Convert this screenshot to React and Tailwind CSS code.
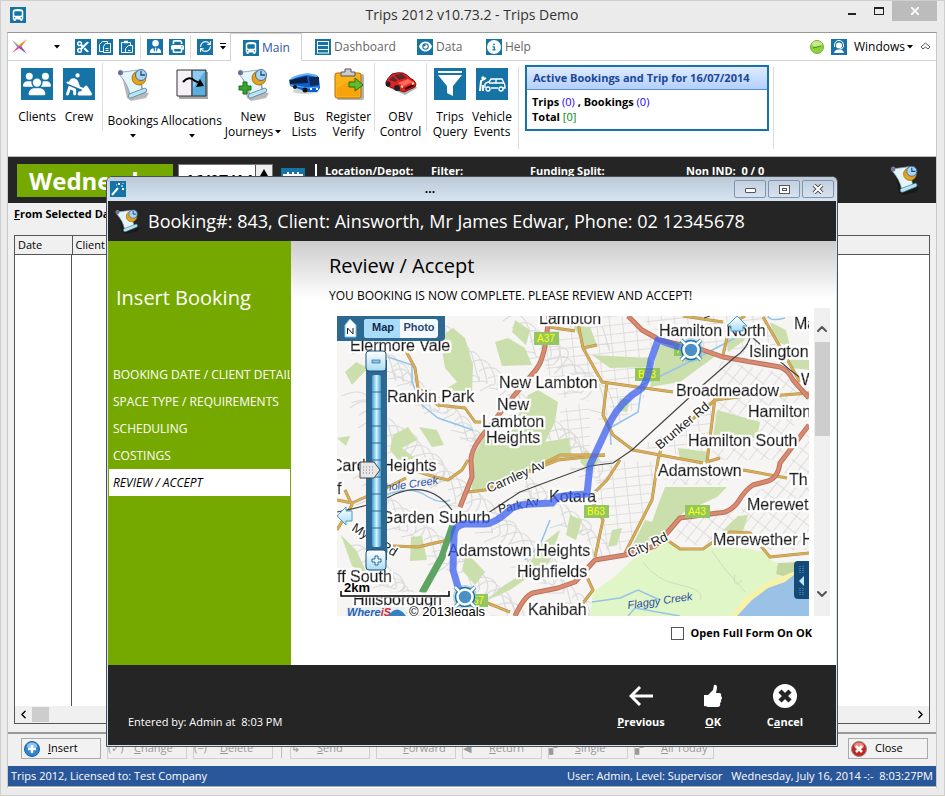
import React, { useState } from 'react';
import {
  FaBusSimple,
  FaCircleInfo,
  FaEye,
  FaPersonDigging,
  FaPrint,
  FaScissors,
  FaUserTie,
  FaUsers,
} from 'react-icons/fa6';
import { ChevronDown, ChevronLeft, ChevronRight, ChevronUp, RefreshCw } from 'lucide-react';

const steps = [
  'BOOKING DATE / CLIENT DETAILS',
  'SPACE TYPE / REQUIREMENTS',
  'SCHEDULING',
  'COSTINGS',
  'REVIEW / ACCEPT',
];

function Tile({ children, big }) {
  return (
    <span className={`flex shrink-0 items-center justify-center bg-[#1573a5] text-white ${big ? 'size-8' : 'size-4'}`}>
      {children}
    </span>
  );
}

function Caret() {
  return (
    <svg width="6" height="4" viewBox="0 0 6 4" className="shrink-0">
      <path d="M0 0H6L3 3.5Z" fill="#000" />
    </svg>
  );
}

function ScrollIcon({ size = 34, plus }) {
  return (
    <svg width={size} height={size} viewBox="0 0 34 34" className="shrink-0">
      <path d="M6 9L24 8L28 25L33 26L30 31L15 34L11 31Z" fill="#000" opacity=".28" />
      <path d="M3 7C1 3 6 2 7 5L22 3L26 23L14 28Q12 17 3 7Z" fill="#e4f6fc" stroke="#7d9dac" strokeWidth=".8" />
      <path d="M2 6C2 2 7 3 7 6C7 9 2 9 2 6Z" fill="#6d7390" />
      <path d="M13 27L29 21Q32 22 30 25L15 31Q11 31 13 27Z" fill="#b8e4f4" stroke="#4d7d94" strokeWidth=".8" />
      <circle cx="23" cy="11" r="7" fill="#e8a31b" stroke="#9c6508" strokeWidth=".8" />
      <circle cx="25" cy="8" r="5.500" fill="#a9d3f3" stroke="#3f6f9c" />
      <path d="M25 4V8L29 8" stroke="#1d4a78" fill="none" strokeWidth="1.300" />
      {plus && <path d="M7 15H11V19H15V23H11V27H7V23H3V19H7Z" fill="#37a42c" stroke="#1c6d1a" />}
    </svg>
  );
}

function AllocationsIcon() {
  return (
    <svg width="34" height="32" viewBox="0 0 34 32">
      <path d="M4 4H33V31H4Z" fill="#000" opacity=".35" />
      <path d="M2 2H17V28H2Z" fill="#f6f1f8" stroke="#333" />
      <path d="M17 2H31V28H17Z" fill="#5baede" stroke="#333" />
      <path d="M18 3H30L18 20Z" fill="#8ecbee" />
      <path d="M8 14Q14 7 20 13L27 16" stroke="#000" strokeWidth="2" fill="none" />
      <path d="M29 18L21 19L25 11Z" />
    </svg>
  );
}

function CoachIcon() {
  return (
    <svg width="33" height="32" viewBox="0 0 33 32">
      <ellipse cx="18" cy="23" rx="13" ry="3" fill="#9aa" opacity=".5" />
      <path d="M1 12Q9 7 20 6Q30 6 31 10L32 20L29 24L20 24L2 18Z" fill="#0d5fd0" />
      <path d="M2 12L19 8L20 15L2 16Z" fill="#0b1f45" />
      <path d="M21 9L31 9L31 17L22 18Z" fill="#102b57" />
      <path d="M3 11Q10 7 20 6L29 8" stroke="#66b5ff" strokeWidth="2" fill="none" />
      <path d="M2 17L20 20L31 19" stroke="#5db1ff" fill="none" />
      <circle cx="17" cy="22" r="2.5" fill="#111" />
      <circle cx="7" cy="19" r="2" fill="#111" />
      <path d="M22 21H24M28 21H30" stroke="#fff" strokeWidth="2" />
    </svg>
  );
}

function ClipIcon() {
  return (
    <svg width="32" height="32" viewBox="0 0 32 32">
      <rect x="4" y="6" width="27" height="26" rx="2" fill="#000" opacity=".3" />
      <rect x="2" y="5" width="26" height="25" rx="2" fill="#fbb216" stroke="#b06f08" />
      <path d="M4 20L26 8V28H4Z" fill="#f59a06" opacity=".6" />
      <path d="M8 8V4H12V1H18V4H22V8Z" fill="#ccc" stroke="#555" />
      <path d="M16 14H22V10L30 17L22 23V19H16Z" fill="#62bd2e" stroke="#2a6d12" />
    </svg>
  );
}

function CarIcon() {
  return (
    <svg width="34" height="32" viewBox="0 0 34 32">
      <path d="M6 20L21 27L33 20L29 15Z" fill="#000" opacity=".3" />
      <path d="M2 14Q3 11 8 6Q14 4 19 5Q24 7 26 10Q31 12 32 16L31 19L20 24L14 22L3 18Z" fill="#e32222" stroke="#7d0e0e" />
      <path d="M5 12L9 8L13 12L12 14ZM10 7L18 6L23 10L15 12Z" fill="#5b2a31" />
      <path d="M14 15L24 11L29 14L20 18Z" fill="#ff6a5c" />
      <circle cx="13" cy="20" r="3" fill="#222" />
      <circle cx="4" cy="16" r="2.5" fill="#222" />
      <path d="M21 21L30 17" stroke="#300" strokeWidth="2" />
      <path d="M17 18L19 19M28 16L30 15" stroke="#ffe680" strokeWidth="2" />
    </svg>
  );
}

function FunnelIcon() {
  return (
    <svg width="32" height="32" viewBox="0 0 32 32" fill="#fff">
      <path d="M4 3H28V5H4ZM4 7H28L19 18V28L13 25V18Z" />
    </svg>
  );
}

function VehicleEventIcon() {
  return (
    <svg width="32" height="32" viewBox="0 0 32 32" fill="none" stroke="#fff" strokeWidth="1.4">
      <path d="M9 20V16Q9 15 13 14L15 11H26L28 15Q29 16 29 20H27M22 20H15M13 15H28M20 11V15" />
      <circle cx="12" cy="21" r="2" />
      <circle cx="25" cy="21" r="2" />
      <path d="M4 23L5 13L10 10M7 17V23" strokeWidth="2" />
      <circle cx="7" cy="10" r="1" fill="#fff" />
    </svg>
  );
}

function RibbonItem({ icon, lines, width, low, caret, inlineCaret }) {
  return (
    <button type="button" className={`flex shrink-0 flex-col items-center ${width}`}>
      <span className="flex h-8 items-center justify-center">{icon}</span>
      <span className={`flex flex-col items-center whitespace-nowrap leading-[15px] ${low ? 'mt-[13px]' : 'mt-[9px]'}`}>
        {lines.map((line, i) => (
          <span key={line} className="flex items-center gap-0.5">
            {line}
            {inlineCaret && i === lines.length - 1 && <Caret />}
          </span>
        ))}
      </span>
      {caret && <span className="mt-1.5"><Caret /></span>}
    </button>
  );
}

function Separator({ tall }) {
  return <span className={`block w-px shrink-0 bg-[#dcdcdc] ${tall ? 'h-[82px]' : 'h-[68px]'}`} />;
}

function TitleBar() {
  return (
    <header className="flex h-[31px] shrink-0 items-start">
      <span className="ml-0.5 mt-1.5"><Tile><FaBusSimple size={12} /></Tile></span>
      <h1 className="flex-1 pl-[80px] pt-[3px] text-center text-sm leading-[22px] text-[#333]">Trips 2012 v10.73.2 - Trips Demo</h1>
      <button type="button" aria-label="Minimize" className="flex h-5 w-7 items-center justify-center">
        <span className="mt-1.5 h-0.5 w-2 bg-[#222]" />
      </button>
      <button type="button" aria-label="Maximize" className="flex h-5 w-[26px] items-center justify-center">
        <span className="h-2 w-2.5 border border-t-2 border-[#222]" />
      </button>
      <button type="button" aria-label="Close" className="flex h-5 w-[45px] items-center justify-center bg-[#bcbcbc]">
        <svg width="8" height="8" viewBox="0 0 8 8" stroke="#fff" strokeWidth="1.8"><path d="M0 0L8 8M8 0L0 8" /></svg>
      </button>
    </header>
  );
}

function MenuRow() {
  return (
    <nav className="flex h-7 shrink-0 items-stretch text-xs text-[#666]">
      <div className="flex h-7 w-[222px] shrink-0 items-center border-b border-[#d2d2d2] pl-1">
        <button type="button" aria-label="Application menu" className="flex items-center gap-[27px]">
          <svg width="15" height="15" viewBox="0 0 15 15">
            <path d="M0 1L8 7.500L6 9Z" fill="#4a9ad8" />
            <path d="M15 0L9 8L7 6Z" fill="#f08a1c" />
            <path d="M0 14L7 6L9 8Z" fill="#e64a9a" />
            <path d="M15 15L7 9L9 7Z" fill="#7b4fc0" />
            <path d="M0 1L5 6L8 7Z" fill="#f3c52b" />
          </svg>
          <Caret />
        </button>
        <div className="ml-[15px] flex gap-1.5">
          <button type="button" aria-label="Cut"><Tile><FaScissors size={12} /></Tile></button>
          <button type="button" aria-label="Copy">
            <Tile>
              <svg width="14" height="14" viewBox="0 0 14 14" fill="#1573a5" stroke="#fff"><path d="M1.500 4.500L4.500 1.500H9.500V11.500H1.500Z" /><path d="M5.500 6.500L7.500 3.500H12.500V12.500H5.500ZM7.500 8.500H10.500M7.500 10.500H10.500" /></svg>
            </Tile>
          </button>
          <button type="button" aria-label="Paste">
            <Tile>
              <svg width="14" height="14" viewBox="0 0 14 14" fill="#1573a5" stroke="#fff"><path d="M1.500 2.500H10.500V12.500H1.500Z" /><path d="M4 2H8" strokeWidth="2.500" /><path d="M5.500 8.500L8.500 5.500H12.500V12.500H5.500ZM8 10.500H10.500" /></svg>
            </Tile>
          </button>
        </div>
        <span className="ml-[5px] mr-1.5 h-6 w-px bg-[#dcdcdc]" />
        <div className="flex gap-1.5">
          <button type="button" aria-label="User"><Tile><FaUserTie size={13} /></Tile></button>
          <button type="button" aria-label="Print"><Tile><FaPrint size={13} /></Tile></button>
        </div>
        <span className="ml-[5px] mr-1.5 h-6 w-px bg-[#dcdcdc]" />
        <button type="button" aria-label="Refresh"><Tile><RefreshCw size={13} /></Tile></button>
        <button type="button" aria-label="Customize" className="ml-[7px] flex flex-col items-center gap-0.5">
          <span className="h-px w-1.5 bg-black" />
          <Caret />
        </button>
      </div>
      <a href="#main" className="flex w-[72px] shrink-0 items-center gap-[3px] border-x border-t border-[#d2d2d2] pl-3 text-[#2b579a]">
        <Tile><FaBusSimple size={12} /></Tile>Main
      </a>
      <div className="flex flex-1 items-center border-b border-[#d2d2d2] pl-[13px]">
        <a href="#dashboard" className="flex w-[102px] items-center gap-[3px]">
          <Tile>
            <svg width="14" height="14" viewBox="0 0 14 14" fill="none" stroke="#fff"><path d="M1 1.500H13M1 5.500H13M1 9.500H13M1 13H13M1.500 1V13M12.500 1V13" /></svg>
          </Tile>
          Dashboard
        </a>
        <a href="#data" className="flex w-[69px] items-center gap-[3px]"><Tile><FaEye size={13} /></Tile>Data</a>
        <a href="#help" className="flex items-center gap-[3px]"><Tile><FaCircleInfo size={14} /></Tile>Help</a>
        <div className="ml-auto flex items-center gap-[7px] pr-[5px] text-black">
          <svg width="14" height="14" viewBox="0 0 14 14">
            <circle cx="7" cy="7" r="6.500" fill="#8fd03f" stroke="#79b035" />
            <ellipse cx="7" cy="4" rx="5" ry="3" fill="#c5ea8e" />
            <path d="M3 8L11 6" stroke="#4b8a1c" />
          </svg>
          <Tile>
            <svg width="16" height="16" viewBox="0 0 16 16" fill="none" stroke="#fff">
              <path d="M3.500 8V6Q4 1.500 8 1.500T12.500 6V8" />
              <circle cx="8" cy="6.500" r="3" fill="#fff" stroke="none" />
              <path d="M3 14Q4 10 8 10.500Q12 10 13 14" fill="#fff" stroke="none" />
              <path d="M12 8Q12 10 9 10" />
            </svg>
          </Tile>
          <button type="button" className="flex items-center gap-0.5">Windows<Caret /></button>
          <button type="button" aria-label="Collapse ribbon">
            <svg width="11" height="9" viewBox="0 0 11 9" fill="none" stroke="#555"><path d="M1 5L5.500 1L10 5L8 7L5.500 5L3 7Z" /></svg>
          </button>
        </div>
      </div>
    </nav>
  );
}

function Ribbon() {
  return (
    <div className="flex h-[95px] shrink-0 items-start pl-2 text-xs leading-[15px]">
      <div className="flex pt-[7px]">
        <RibbonItem width="w-[42px]" icon={<Tile big><FaUsers size={28} /></Tile>} lines={['Clients']} />
        <RibbonItem width="w-[42px]" icon={<Tile big><FaPersonDigging size={26} /></Tile>} lines={['Crew']} />
      </div>
      <span className="ml-0.5 mt-0.5"><Separator /></span>
      <div className="ml-0.5 flex pt-[7px]">
        <RibbonItem width="w-[56px]" icon={<ScrollIcon />} lines={['Bookings']} low caret />
        <RibbonItem width="w-[61px]" icon={<AllocationsIcon />} lines={['Allocations']} low caret />
        <RibbonItem width="w-[62px]" icon={<ScrollIcon plus />} lines={['New', 'Journeys']} inlineCaret />
        <RibbonItem width="w-[40px]" icon={<CoachIcon />} lines={['Bus', 'Lists']} />
        <RibbonItem width="w-[49px]" icon={<ClipIcon />} lines={['Register', 'Verify']} />
      </div>
      <span className="ml-px mt-0.5"><Separator /></span>
      <div className="px-px pt-[7px]">
        <RibbonItem width="w-[49px]" icon={<CarIcon />} lines={['OBV', 'Control']} />
      </div>
      <span className="mt-0.5"><Separator /></span>
      <div className="ml-0.5 flex pt-[7px]">
        <RibbonItem width="w-[42px]" icon={<Tile big><FunnelIcon /></Tile>} lines={['Trips', 'Query']} />
        <RibbonItem width="w-[42px]" icon={<Tile big><VehicleEventIcon /></Tile>} lines={['Vehicle', 'Events']} />
      </div>
      <span className="ml-[5px] mt-1.5"><Separator tall /></span>
      <section className="ml-1.5 mt-1 h-[66px] w-[244px] shrink-0 border-2 border-[#1573a5] text-[11px] leading-[15px]">
        <h2 className="whitespace-nowrap border-b border-[#5b8fd0] bg-gradient-to-b from-[#dfebfd] to-[#b3d0fb] pl-1.5 font-bold leading-[22px] text-[#1b4796]">
          Active Bookings and Trip for 16/07/2014
        </h2>
        <p className="pl-[5px] pt-1 font-bold">
          Trips <span className="font-normal text-[#2200ff]">(0)</span> , Bookings <span className="font-normal text-[#2200ff]">(0)</span>
        </p>
        <p className="pl-[5px] font-bold">Total <span className="font-normal text-[#058a05]">[0]</span></p>
      </section>
      <span className="ml-1 mt-1.5"><Separator tall /></span>
    </div>
  );
}

function DayBand() {
  return (
    <div className="flex h-[47px] shrink-0 items-start border-t border-[#bbb] bg-[#252525] pl-[9px] pt-[7px] text-[11px] font-bold leading-[14px] text-white">
      <div className="h-[33px] w-[156px] shrink-0 bg-[#76a900] pl-3 text-2xl leading-[34px]">Wednesday</div>
      <div className="ml-[5px] flex h-[33px] w-[95px] shrink-0 border border-[#777] bg-white text-black">
        <input type="text" aria-label="Date" defaultValue="16/07/14" className="w-[78px] min-w-0 pl-1.5 text-base font-bold" />
        <button type="button" aria-label="Next day" className="flex w-[17px] justify-center border-l border-[#555] bg-[#eee] pt-1">
          <svg width="8" height="7" viewBox="0 0 8 7"><path d="M4 0L8 7H0Z" /></svg>
        </button>
      </div>
      <span className="ml-2 mt-1 flex h-6 w-6 shrink-0 justify-center bg-[#1573a5] pt-1">
        <svg width="20" height="14" viewBox="0 0 20 14" fill="#fff"><path d="M0 2H4V0H6V2H9V0H11V2H14V0H16V2H20V5H0ZM0 7H20V14H0Z" /></svg>
      </span>
      <span className="ml-[10px] h-8 w-0.5 shrink-0 bg-white" />
      <span className="ml-2 w-[106px] shrink-0">Location/Depot:</span>
      <span className="w-[99px] shrink-0">Filter:</span>
      <span className="w-[156px] shrink-0">Funding Split:</span>
      <span className="shrink-0">Non IND:&nbsp; 0 / 0</span>
      <span className="ml-auto mr-4"><ScrollIcon size={31} /></span>
    </div>
  );
}

function BookingList() {
  return (
    <div className="mx-1.5 flex flex-1 flex-col border border-[#555] bg-white text-[11px]">
      <table className="w-full table-fixed text-left">
        <thead>
          <tr className="h-[18px] border-b border-[#555] bg-[#f0f0f0]">
            <th className="w-[57px] border-r border-[#555] pl-[3px] font-normal">Date</th>
            <th className="pl-[3px] font-normal">Client</th>
          </tr>
        </thead>
      </table>
      <div className="w-[57px] flex-1 border-r border-[#555]" />
      <div className="flex h-[17px] items-center justify-between bg-[#f0f0f0]">
        <div className="flex h-full items-center">
          <button type="button" aria-label="Scroll left" className="flex w-[17px] justify-center"><ChevronLeft size={13} strokeWidth={2.5} /></button>
          <span className="h-[15px] w-[17px] bg-[#cdcdcd]" />
        </div>
        <button type="button" aria-label="Scroll right" className="flex w-[17px] justify-center"><ChevronRight size={13} strokeWidth={2.5} /></button>
      </div>
    </div>
  );
}

const disabledButtons = [
  { letter: 'C', rest: 'hange', mark: '(✓)' },
  { letter: 'D', rest: 'elete', mark: '(−)' },
  { letter: 'S', rest: 'end', mark: '↳', split: true },
  { letter: 'F', rest: 'orward', mark: '' },
  { letter: 'R', rest: 'eturn', mark: '◀' },
  { letter: 'S', rest: 'ingle', mark: '▞' },
  { letter: 'A', rest: 'll Today', mark: '▞' },
];

function ButtonRow() {
  return (
    <div className="flex h-[34px] shrink-0 items-start gap-1.5 border-t-2 border-[#999] px-2 pl-[13px] pt-1 text-[11px]">
      <button type="button" className="flex h-[21px] w-20 shrink-0 items-center gap-2 border border-[#aaa] bg-[#f2f2f2] pl-0.5">
        <svg width="16" height="16" viewBox="0 0 16 16">
          <circle cx="8" cy="8" r="7.500" fill="#2f86d2" stroke="#1a5ea3" />
          <ellipse cx="8" cy="5" rx="5" ry="3.500" fill="#8cc4f2" />
          <path d="M8 4V12M4 8H12" stroke="#fff" strokeWidth="2.500" />
        </svg>
        <span><u>I</u>nsert</span>
      </button>
      {disabledButtons.map(({ letter, rest, mark, split }) => (
        <React.Fragment key={letter + rest}>
          {split && <span className="mx-0.5 h-5 w-px shrink-0 bg-[#bbb]" />}
          <button type="button" disabled className="flex h-[21px] w-20 shrink-0 items-center border border-[#d0d0d0] text-[#9a9a9a]">
            <span className="w-[26px] text-left">{mark}</span>
            <span><u>{letter}</u>{rest}</span>
          </button>
        </React.Fragment>
      ))}
      <button type="button" className="ml-auto flex h-[21px] w-20 shrink-0 items-center gap-2 border border-[#aaa] bg-[#f2f2f2] pl-0.5">
        <svg width="16" height="16" viewBox="0 0 16 16">
          <circle cx="8" cy="8" r="7.500" fill="#c62420" stroke="#8c8c8c" />
          <ellipse cx="8" cy="5" rx="5" ry="3.500" fill="#ee8a78" />
          <path d="M5 5L11 11M11 5L5 11" stroke="#fff" strokeWidth="2.500" />
        </svg>
        Close
      </button>
    </div>
  );
}

const parks = [
  'M478 333L495 342L508 338L525 348L532 365L502 366L495 342Z',
  'M440 337L453 328L465 338L473 365L472 395L465 402L447 388L457 382L445 368Z',
  'M528 395L538 390L558 402L555 422L545 442L569 438L571 457L538 465L520 477L485 490L472 490L470 462L485 435L505 445Z',
  'M658 345L703 348L717 355L680 382L650 387Z',
  'M592 355L650 358L652 367L610 368Z',
  'M573 325L590 327L597 345L585 348Z',
  'M717 410L760 422L757 438L713 437Z',
  'M678 448L708 452L706 462L680 460Z',
  'M732 328L745 340L728 352L726 338Z',
  'M770 322L786 330L790 346L776 342Z',
  'M788 360H809V370L792 368Z',
  'M665 487L727 487L717 497L683 513L667 533L630 550L645 520L652 522L658 505Z',
  'M612 530L622 528L617 545L608 547Z',
  'M738 516L748 515L743 531L722 531Z',
  'M393 435L408 427L417 440L402 448L415 458L400 462L390 450Z',
  'M419 427L437 430L444 445L432 447Z',
  'M345 372L356 362L368 368L352 385Z',
  'M388 326L402 318L412 330L398 337Z',
  'M411 537L422 536L427 560L410 561Z',
  'M540 545L560 530L550 562L510 590L488 600L500 588L525 572Z',
  'M466 552L485 572L475 585L462 570Z',
  'M570 515L582 520L576 540L566 535Z',
  'M337 438L350 436L346 446Z',
  'M341 535L356 550L368 575L352 566Z',
  'M515 320L530 330L526 345L512 332Z',
  'M585 450L600 460L590 472L580 462Z',
  'M620 398L630 400L627 412L617 410Z',
];

const redRoads = [
  'M549 316L546 340Q543 362 535 371L512 398L485 432Q470 450 471 462L472 477L460 507',
  'M628 316L642 330L660 340L703 350L723 357L780 367Q788 370 793 380L809 398',
  'M809 425L780 463Q778 478 768 481L753 485Q745 490 738 502Q730 513 718 513L680 518L667 533L655 546L625 555L595 560L575 582L558 588L533 593Q525 595 515 616',
];

const tanRoads = [
  'M400 338L407 353L415 368L418 388L438 405L465 408L475 422L487 422',
  'M549 327L575 331',
  'M337 500L352 503L388 487L406 478',
  'M393 546L418 547L448 540',
  'M400 466L435 477L448 480L462 470L468 460',
  'M468 492L485 490L525 473L558 460L605 455',
  'M577 318L583 348L602 382L673 392',
  'M607 382L603 415L613 435L633 450L703 463',
  'M715 398L707 462L720 458',
  'M715 400L753 395L770 396L809 393',
  'M683 316L723 322M763 317L783 352L800 382',
  'M723 355L730 325L745 316M583 348L597 345',
  'M715 400L662 445L658 460L652 500L625 553',
  'M620 460L607 480L590 497L603 520L595 557',
  'M667 540L680 549L703 549L713 542L730 532L750 533L770 557L809 553',
  'M587 577L593 590L583 603M743 470L787 478',
  'M337 530L352 505L345 490M465 595L485 602L510 612',
  'M538 466L560 455L605 455',
];

// Short curved local streets, spread over the suburbs on the western side.
const lanes = Array.from({ length: 125 }, (_, i) => {
  const x = 340 + ((i * 73) % 250);
  const y = 320 + ((i * 137) % 292);
  const a = 8 + ((i * 31) % 17);
  const b = 5 + ((i * 17) % 13);
  return `M${x} ${y}q${a} ${-b} ${a + 7} ${b - 5}t${b - 12} ${a}l${-b} ${6 - (i % 12)}`;
}).join('');

const places = [
  [539, 324, 'Lambton'], [350, 351, 'Elermore Vale'], [387, 402, 'Rankin Park'], [499, 388, 'New Lambton'],
  [497, 410, 'New'], [482, 427, 'Lambton'], [486, 443, 'Heights'], [659, 336, 'Hamilton North'],
  [794, 329, 'Ma'], [749, 357, 'Islington'], [801, 385, 'W'], [676, 396, 'Broadmeadow'],
  [748, 417, 'Hamilton'], [688, 446, 'Hamilton South'], [658, 476, 'Adamstown'], [331, 471, 'Cardiff Heights'],
  [337, 494, 'f'], [381, 523, 'Garden Suburb'], [549, 502, 'Kotara'], [448, 556, 'Adamstown Heights'],
  [517, 577, 'Highfields'], [337, 582, 'ff South'], [353, 605, 'Hillsborough'], [528, 615, 'Kahibah'],
  [747, 510, 'Merewet'], [713, 545, 'Merewether H'], [789, 485, 'Th'],
];

const streetNames = [
  [660, 450, -40, 'Brunker Rd'], [489, 493, -24, 'Carnley Av'], [630, 558, -25, 'City Rd'], [351, 530, 32, 'Myall Rd'],
];

const shields = [[534, 332, 'A37'], [635, 368, 'B63'], [584, 505, 'B63'], [685, 505, 'A43'], [674, 343, 'A15'], [463, 594, 'B57']];

function RouteEnd({ x, y }) {
  return (
    <g fill="none">
      <circle cx={x} cy={y} r="12" fill="#6fb6d8" opacity=".45" />
      <circle cx={x} cy={y} r="8" stroke="#1c6f9e" strokeWidth="4.500" />
      <path d={`M${x - 10} ${y - 10}l5 5M${x + 10} ${y - 10}l-5 5M${x - 10} ${y + 10}l5 -5M${x + 10} ${y + 10}l-5 -5`} stroke="#1c6f9e" strokeWidth="4" />
      <circle cx={x} cy={y} r="7.500" fill="#4a8fc6" stroke="#fff" strokeWidth="2.500" />
      <path d={`M${x - 10} ${y - 10}l4 4M${x + 10} ${y - 10}l-4 4M${x - 10} ${y + 10}l4 -4M${x + 10} ${y + 10}l-4 -4`} stroke="#fff" strokeWidth="2.500" />
    </g>
  );
}

function RouteMap() {
  return (
    <svg viewBox="337 316 472 300" preserveAspectRatio="xMinYMin slice" className="h-[300px] min-w-0 flex-1 font-['Liberation_Sans',sans-serif]" role="img" aria-label="Route map">
      <defs>
        <pattern id="grid-a" width="13" height="9" patternUnits="userSpaceOnUse" patternTransform="rotate(-6)">
          <path d="M0 0H13M0 0V9" stroke="#d8d8d8" fill="none" strokeWidth="1.500" />
        </pattern>
        <pattern id="grid-b" width="9" height="14" patternUnits="userSpaceOnUse" patternTransform="rotate(38)">
          <path d="M0 0H9M0 0V14" stroke="#d8d8d8" fill="none" strokeWidth="1.500" />
        </pattern>
        <linearGradient id="groove" x1="0" x2="1">
          <stop offset="0" stopColor="#3d9fd8" />
          <stop offset=".5" stopColor="#d8f2ff" />
          <stop offset="1" stopColor="#3d9fd8" />
        </linearGradient>
        <linearGradient id="knob" x1="0" x2="0" y1="0" y2="1">
          <stop offset="0" stopColor="#fff" />
          <stop offset="1" stopColor="#a9dcf5" />
        </linearGradient>
        <filter id="halo" filterUnits="userSpaceOnUse" x="330" y="310" width="490" height="312">
          <feMorphology in="SourceAlpha" operator="dilate" radius="1.500" result="spread" />
          <feFlood floodColor="#fff" />
          <feComposite in2="spread" operator="in" />
          <feMerge>
            <feMergeNode />
            <feMergeNode in="SourceGraphic" />
          </feMerge>
        </filter>
      </defs>
      <rect x="337" y="316" width="472" height="300" fill="#f6f5f4" />
      <path d={lanes} fill="none" stroke="#dcdcdc" strokeWidth="1.200" />
      <path d="M549 316H628L658 340L640 385L600 383L560 400L545 365ZM607 385L640 395L715 402L708 460L640 447L612 430ZM590 400L590 460H560V410ZM600 460L655 462L650 505L625 550L600 550L605 520L592 497ZM640 316H770L780 360L665 340Z" fill="url(#grid-a)" />
      <path d="M720 360L790 375L805 400L780 460L712 460L716 402ZM740 500L780 480L809 430V550L770 550L745 530ZM685 517L735 512L740 530L700 546L672 538ZM665 462L740 465L725 485H665Z" fill="url(#grid-b)" />
      <path d="M655 386L700 388L716 396L690 425L640 445L612 432Z" fill="#f8f7f6" />
      <g fill="#cbdfac">{parks.map((d) => <path key={d} d={d} />)}</g>
      <path d="M590 616L593 592L613 578L632 560L667 541L680 550L703 551L715 544L765 552L773 562L809 566V616Z" fill="#e1f6c6" />
      <path d="M778 563L800 562L809 570L790 578L776 574Z" fill="#c3d6a0" />
      <path d="M732 616L745 598L765 584L790 573L809 568V616Z" fill="#f8f2a8" />
      <path d="M737 616L752 600L768 588L785 582L795 574L809 572V616Z" fill="#9ac1e6" />
      <path d="M643 562Q655 580 680 585T700 600M712 551Q725 570 730 575T745 592M735 575Q732 590 742 580" fill="none" stroke="#cfdcc0" />
      <g fill="none" stroke="#93c4ec" strokeWidth="1.500">
        <path d="M388 357L412 365L412 382L422 405L438 418L473 430M737 337L703 355L677 368L642 385L638 412L610 428L611 445M592 602L620 598L638 590L660 600M628 616L635 608L680 616M383 496Q410 485 425 495T450 500M550 520L540 545L525 560M768 316Q770 322 785 318" />
      </g>
      <g fill="none" stroke="#b18f4c" strokeWidth="3" strokeLinejoin="round">{tanRoads.map((d) => <path key={d} d={d} />)}</g>
      <g fill="none" stroke="#d8ad58" strokeWidth="2" strokeLinejoin="round">{tanRoads.map((d) => <path key={d} d={d} />)}</g>
      <g fill="none" stroke="#b9735c" strokeWidth="5" strokeLinejoin="round">{redRoads.map((d) => <path key={d} d={d} />)}</g>
      <g fill="none" stroke="#d98a70" strokeWidth="3" strokeLinejoin="round">{redRoads.map((d) => <path key={d} d={d} />)}</g>
      <path d="M453 525L442 557L422 593" fill="none" stroke="#5ea564" strokeWidth="7" />
      <path d="M750 338Q746 350 735 357L703 385L632 450L613 463L590 466L520 492L485 515M753 338L790 370L809 384M704 318L710 316M337 512Q375 505 395 494Q430 480 452 510" fill="none" stroke="#444" strokeWidth="1.200" />
      {shields.map(([x, y, label]) => (
        <g key={`${x}-${y}`}>
          <rect x={x} y={y} width="25" height="13" fill="#93c663" />
          <text x={x + 12} y={y + 10} textAnchor="middle" fontSize="10" fill="#ffff00">{label}</text>
        </g>
      ))}
      <g fontSize="16" fill="#1c1c1c" stroke="#1c1c1c" strokeWidth=".5" filter="url(#halo)">
        {places.map(([x, y, name]) => <text key={`${x}-${y}`} x={x} y={y}>{name}</text>)}
      </g>
      <g fontSize="13" fill="#222" stroke="#fff" strokeWidth="3" style={{ paintOrder: 'stroke' }}>
        {streetNames.map(([x, y, angle, name]) => <text key={name} x={x} y={y} transform={`rotate(${angle} ${x} ${y})`}>{name}</text>)}
      </g>
      <g fontSize="11" fontStyle="italic" fill="#2a4f9e">
        <text x="366" y="494" transform="rotate(-8 366 494)">Tickhole Creek</text>
        <text x="628" y="609" transform="rotate(-8 628 609)">Flaggy Creek</text>
      </g>
      <text x="499" y="513" transform="rotate(-11 499 513)" fontSize="12" fill="#223">Park Av</text>
      <path d="M688 350L658 340L651 360Q648 380 642 388Q620 402 610 422L590 465L587 494L570 495L558 497L552 503L532 504Q520 504 512 508Q495 524 485 524L464 524Q454 526 454 535L453 570L458 587L465 596" fill="none" stroke="#3a5ff0" strokeOpacity=".74" strokeWidth="7" strokeLinejoin="round" />
      <RouteEnd x={691} y={350} />
      <RouteEnd x={465} y={597} />

      {/* Pan arrows */}
      <path d="M737 316L747 326H743V331H731V326H727Z" fill="url(#knob)" stroke="#4a9cc8" />
      <path d="M337 516L346 507V511H352V521H346V525Z" fill="url(#knob)" stroke="#4a9cc8" />

      {/* Map / photo switch */}
      <path d="M337 316H445V337Q445 341 441 341H337Z" fill="#2d6890" />
      <path d="M350 319L356 325V337H345V325Z" fill="#fff" stroke="#7cc4ea" />
      <path d="M347.500 334V328L353 334V328" fill="none" stroke="#123" />
      <rect x="364" y="319" width="74" height="19" rx="3" fill="#f4faff" />
      <path d="M367 319H400V338H367Q364 338 364 335V322Q364 319 367 319Z" fill="#a8dcf8" />
      <text x="383" y="331" textAnchor="middle" fontSize="11" fontWeight="bold" fill="#14284f">Map</text>
      <text x="419" y="331" textAnchor="middle" fontSize="11" fontWeight="bold" fill="#2a4a6e">Photo</text>

      {/* Zoom slider */}
      <rect x="366" y="360" width="21" height="200" fill="#2d6890" />
      <rect x="372" y="375" width="9" height="172" rx="2" fill="url(#groove)" />
      <path d="M372 392H381M372 409H381M372 426H381M372 443H381M372 460H381M372 477H381M372 494H381M372 511H381M372 528H381" stroke="#2d6890" />
      <rect x="366" y="351" width="20" height="20" rx="3" fill="url(#knob)" stroke="#1d4e74" />
      <rect x="372" y="360" width="8" height="3" fill="#8cc8ea" stroke="#2d6890" strokeWidth=".7" />
      <rect x="366" y="550" width="20" height="20" rx="3" fill="url(#knob)" stroke="#1d4e74" />
      <path d="M375 556H378V559H381V562H378V565H375V562H372V559H375Z" fill="#e4f5fe" stroke="#2d6890" />
      <path d="M360 462H374L380 470L374 478H360Z" fill="#e6e6e6" stroke="#444" />
      <path d="M363 467H373M363 470H373M363 473H373" stroke="#888" strokeDasharray="1 2" />

      {/* Scale and credits */}
      <path d="M341 591V595H449V591" fill="none" stroke="#fff" strokeWidth="5" />
      <path d="M341 591V596H449V591" fill="none" stroke="#000" strokeWidth="1.500" />
      <text x="344" y="592" fontSize="13" fontWeight="bold" stroke="#fff" strokeWidth="2" style={{ paintOrder: 'stroke' }}>2km</text>
      <rect x="346" y="607" width="60" height="9" fill="#e8f0f8" />
      <text x="347" y="616" fontSize="11" fontStyle="italic" fontWeight="bold" fill="#2660b0">Where<tspan fill="#d8232a">iS</tspan></text>
      <path d="M388 616Q397 603 406 616Z" fill="#3680c0" />
      <text x="409" y="616" fontSize="13" stroke="#fff" strokeWidth="3" style={{ paintOrder: 'stroke' }}>© 2013legals</text>

      {/* Side drawer handle */}
      <path d="M809 561H798Q794 561 794 565V595Q794 599 798 599H809Z" fill="#134a78" />
      <path d="M804 576L799 581L804 586Z" fill="#bfe6fa" />
      <path d="M800 566V574M803 566V574M800 588V596M803 588V596" stroke="#5fa4cf" strokeDasharray="1 1" />
    </svg>
  );
}

function FooterButton({ icon, children }) {
  return (
    <button type="button" className="flex w-[72px] flex-col items-center gap-1">
      <span className="flex h-7 items-center">{icon}</span>
      <span className="leading-4">{children}</span>
    </button>
  );
}

function BookingDialog() {
  const [step, setStep] = useState(4);
  const [fullForm, setFullForm] = useState(false);
  const chromeButton = 'flex h-[18px] w-8 items-center justify-center rounded-[2px] border border-[#8293ad] bg-gradient-to-b from-[#c3d0de] to-[#d6e2ef]';

  return (
    <div role="dialog" aria-label="Booking" className="absolute bottom-12 left-[105px] right-[106px] top-[175px] flex flex-col overflow-hidden rounded-t-md border border-[#4a4f55] bg-[#d6e3f1] px-px pb-px">
      <div className="flex h-6 shrink-0 items-center bg-gradient-to-b from-[#bccad8] to-[#d6e3f1] pl-0.5 pr-0.5">
        <Tile>
          <svg width="16" height="16" viewBox="0 0 16 16" fill="none" stroke="#fff">
            <path d="M2 14L8 7" strokeWidth="2" />
            <path d="M8 2L10 4M10 2L8 4M12 7L14 9M14 7L12 9M11 5H13M6 4H7M13 2V3" />
          </svg>
        </Tile>
        <span className="flex-1 text-center text-xs font-bold">...</span>
        <div className="flex gap-0.5">
          <button type="button" aria-label="Minimize dialog" className={chromeButton}><span className="mt-0.5 h-[5px] w-[11px] rounded-[1px] border border-[#555] bg-white" /></button>
          <button type="button" aria-label="Maximize dialog" className={chromeButton}><span className="flex h-[9px] w-[11px] items-center justify-center border border-[#555] bg-white"><span className="h-[3px] w-[5px] border border-[#555]" /></span></button>
          <button type="button" aria-label="Close dialog" className={chromeButton}>
            <svg width="12" height="10" viewBox="0 0 12 10"><path d="M2 1L10 9M10 1L2 9" stroke="#555" strokeWidth="4" /><path d="M2 1L10 9M10 1L2 9" stroke="#fff" strokeWidth="2" /></svg>
          </button>
        </div>
      </div>

      <div className="flex h-10 shrink-0 items-center gap-2 whitespace-nowrap bg-[#252525] pl-1.5 text-lg text-white">
        <ScrollIcon size={26} />
        <h2>Booking#: 843, Client: Ainsworth, Mr James Edwar, Phone: 02 12345678</h2>
      </div>

      <div className="flex min-h-0 flex-1">
        <aside className="w-[183px] shrink-0 bg-[#76a900] px-px pt-[42px] text-white">
          <h3 className="pl-[7px] text-xl leading-[30px]">Insert Booking</h3>
          <ol className="mt-12 text-xs">
            {steps.map((label, i) => (
              <li key={label}>
                <button
                  type="button"
                  onClick={() => setStep(i)}
                  className={`block h-[27px] w-full overflow-hidden whitespace-nowrap pl-1 text-left ${i === step ? 'bg-white italic text-black' : ''}`}
                >
                  {label}
                </button>
              </li>
            ))}
          </ol>
        </aside>
        <main className="flex min-w-0 flex-1 flex-col bg-white bg-gradient-to-b from-[#cdcdcd] to-white to-[58px] pl-[38px] pr-1.5 pt-2.5">
          <h3 className="text-xl leading-[30px]">Review / Accept</h3>
          <p className="mt-1.5 text-xs leading-[18px]">YOU BOOKING IS NOW COMPLETE. PLEASE REVIEW AND ACCEPT!</p>
          <div className="mt-[3px] flex gap-[5px] pl-2">
            <div className="flex min-w-0 flex-1 items-end"><RouteMap /></div>
            <div className="flex h-[308px] w-4 shrink-0 flex-col items-center bg-[#f0f0f0] text-[#555]">
              <button type="button" aria-label="Scroll up" className="flex h-[34px] items-center pt-2"><ChevronUp size={16} strokeWidth={3} /></button>
              <span className="h-[94px] w-[15px] bg-[#cdcdcd]" />
              <button type="button" aria-label="Scroll down" className="mt-auto flex h-11 items-center"><ChevronDown size={16} strokeWidth={3} /></button>
            </div>
          </div>
          <label className="mt-2 flex items-center gap-1.5 self-end pr-[18px] text-[11px] font-bold leading-[18px]">
            <input
              type="checkbox"
              checked={fullForm}
              onChange={(e) => setFullForm(e.target.checked)}
              className="size-[13px] appearance-none border border-[#555] bg-white checked:bg-[#1573a5]"
            />
            Open Full Form On OK
          </label>
        </main>
      </div>

      <footer className="flex h-20 shrink-0 items-end bg-[#252525] pb-[15px] pl-5 text-[11px] text-white">
        <p className="leading-4">Entered by: Admin at&nbsp; 8:03 PM</p>
        <div className="ml-auto flex pr-[15px] font-bold">
          <FooterButton
            icon={<svg width="24" height="20" viewBox="0 0 24 20" fill="none" stroke="#fff" strokeWidth="3"><path d="M24 10H2M11 1L2 10L11 19" /></svg>}
          >
            <u>P</u>revious
          </FooterButton>
          <FooterButton
            icon={<svg width="20" height="24" viewBox="0 0 20 24" fill="#fff"><path d="M1 11H5L10 6L11 1Q14 0 14 4L13 9H17Q19 10 18 12Q20 14 18 16Q19 18 17 19Q18 22 15 23H5Q3 22 1 22Z" /></svg>}
          >
            <u>O</u>K
          </FooterButton>
          <FooterButton
            icon={<svg width="26" height="26" viewBox="0 0 26 26"><circle cx="13" cy="13" r="12" fill="#fff" /><path d="M8 8L18 18M18 8L8 18" stroke="#252525" strokeWidth="4.500" /></svg>}
          >
            C<u>a</u>ncel
          </FooterButton>
        </div>
      </footer>
    </div>
  );
}

function App() {
  return (
    <div className="relative flex min-h-screen flex-col overflow-hidden border border-[#cfcfcf] bg-[#ebebeb] px-[7px] pb-[7px] font-['Open_Sans','Noto_Sans',sans-serif] text-black">
      <TitleBar />
      <div className="-ml-px flex flex-1 flex-col border-x border-t border-[#c8c8c8] border-t-[#999] bg-white">
        <MenuRow />
        <Ribbon />
        <DayBand />
        <div className="flex flex-1 flex-col bg-[#f0f0f0]">
          <p className="pb-[13px] pl-1.5 pt-[3px] text-[11px] font-bold leading-4"><u>F</u>rom Selected Day Onwards</p>
          <BookingList />
          <div className="h-2 shrink-0" />
          <ButtonRow />
        </div>
        <div className="flex h-5 shrink-0 items-center justify-between bg-[#2a579a] px-[3px] text-[11px] text-white">
          <span>Trips 2012, Licensed to: Test Company</span>
          <span>User: Admin, Level: Supervisor&nbsp;&nbsp; Wednesday, July 16, 2014 -:-&nbsp; 8:03:27PM</span>
        </div>
        <div className="h-0.5 shrink-0 border-t border-[#aaa]" />
      </div>
      <BookingDialog />
    </div>
  );
}

export default App;
